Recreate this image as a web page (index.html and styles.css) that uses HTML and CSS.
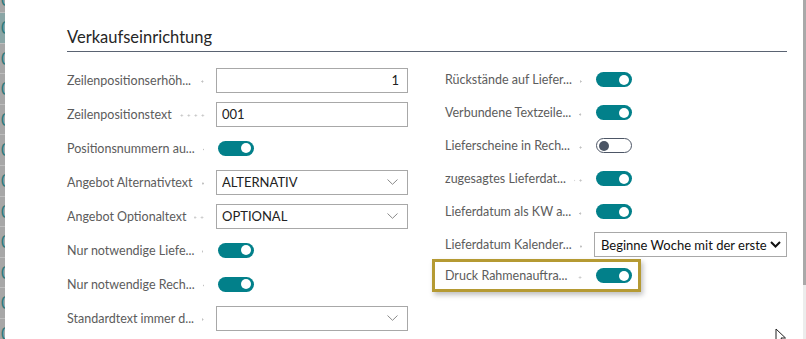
FILE: index.html
```html
<!DOCTYPE html>
<html lang="de">
<head>
  <meta charset="UTF-8" />
  <title>Verkaufseinrichtung</title>
  <link rel="stylesheet" href="styles.css">
</head>
<body>
  <div class="page">
    <div class="backdrop">
      <div class="bg-row">0</div>
      <div class="bg-row active">0</div>
      <div class="bg-row">0</div>
      <div class="bg-row">0</div>
      <div class="bg-row">0</div>
      <div class="bg-row">0</div>
      <div class="bg-row">0</div>
      <div class="bg-row">0</div>
      <div class="bg-row">0</div>
      <div class="bg-row">0</div>
      <div class="bg-row">0</div>
      <div class="bg-row">0</div>
    </div>

    <div class="dialog">
      <h2 class="group-title">Verkaufseinrichtung</h2>

      <div class="fields">
        <div class="column column-left">
          <div class="field">
            <div class="label-wrap"><span class="label">Zeilenpositionserhöh...</span><span class="leader"></span></div>
            <input class="text-input num" type="text" value="1">
          </div>
          <div class="field">
            <div class="label-wrap"><span class="label">Zeilenpositionstext</span><span class="leader"></span></div>
            <input class="text-input" type="text" value="001">
          </div>
          <div class="field">
            <div class="label-wrap"><span class="label">Positionsnummern au...</span><span class="leader"></span></div>
            <div class="toggle on"><span class="knob"></span></div>
          </div>
          <div class="field">
            <div class="label-wrap"><span class="label">Angebot Alternativtext</span><span class="leader"></span></div>
            <div class="select"><span class="select-text">ALTERNATIV</span>
              <svg class="chevron" width="11" height="6" viewBox="0 0 11 6"><polyline points="0.5,0.5 5.5,5.3 10.5,0.5" fill="none" stroke="#8a8a8a" stroke-width="1"/></svg>
            </div>
          </div>
          <div class="field">
            <div class="label-wrap"><span class="label">Angebot Optionaltext</span><span class="leader"></span></div>
            <div class="select"><span class="select-text">OPTIONAL</span>
              <svg class="chevron" width="11" height="6" viewBox="0 0 11 6"><polyline points="0.5,0.5 5.5,5.3 10.5,0.5" fill="none" stroke="#8a8a8a" stroke-width="1"/></svg>
            </div>
          </div>
          <div class="field">
            <div class="label-wrap"><span class="label">Nur notwendige Liefe...</span><span class="leader"></span></div>
            <div class="toggle on"><span class="knob"></span></div>
          </div>
          <div class="field">
            <div class="label-wrap"><span class="label">Nur notwendige Rech...</span><span class="leader"></span></div>
            <div class="toggle on"><span class="knob"></span></div>
          </div>
          <div class="field">
            <div class="label-wrap"><span class="label">Standardtext immer d...</span><span class="leader"></span></div>
            <div class="select"><span class="select-text"></span>
              <svg class="chevron" width="11" height="6" viewBox="0 0 11 6"><polyline points="0.5,0.5 5.5,5.3 10.5,0.5" fill="none" stroke="#8a8a8a" stroke-width="1"/></svg>
            </div>
          </div>
        </div>

        <div class="column column-right">
          <div class="field">
            <div class="label-wrap"><span class="label">Rückstände auf Liefer...</span><span class="leader"></span></div>
            <div class="toggle on"><span class="knob"></span></div>
          </div>
          <div class="field">
            <div class="label-wrap"><span class="label">Verbundene Textzeile...</span><span class="leader"></span></div>
            <div class="toggle on"><span class="knob"></span></div>
          </div>
          <div class="field">
            <div class="label-wrap"><span class="label">Lieferscheine in Rech...</span><span class="leader"></span></div>
            <div class="toggle off"><span class="knob"></span></div>
          </div>
          <div class="field">
            <div class="label-wrap"><span class="label">zugesagtes Lieferdat...</span><span class="leader"></span></div>
            <div class="toggle on"><span class="knob"></span></div>
          </div>
          <div class="field">
            <div class="label-wrap"><span class="label">Lieferdatum als KW a...</span><span class="leader"></span></div>
            <div class="toggle on"><span class="knob"></span></div>
          </div>
          <div class="field">
            <div class="label-wrap"><span class="label">Lieferdatum Kalender...</span><span class="leader"></span></div>
            <div class="select native"><span class="select-text">Beginne Woche mit der ersten vollen Woche</span>
              <svg class="chevron-bold" width="11" height="7" viewBox="0 0 11 7"><polyline points="1,1 5.5,5.5 10,1" fill="none" stroke="#111" stroke-width="2"/></svg>
            </div>
          </div>
          <div class="field highlight">
            <div class="label-wrap"><span class="label">Druck Rahmenauftra...</span><span class="leader"></span></div>
            <div class="toggle on"><span class="knob"></span></div>
          </div>
        </div>
      </div>
    </div>

    <div class="scrollbar"></div>
  </div>

  <svg class="cursor" width="12" height="18" viewBox="0 0 12 18">
    <path d="M1,1 L1,14 L4,11 L6.5,16.5 L8.5,15.5 L6,10 L10.5,10 Z" fill="#fff" stroke="#222" stroke-width="1"/>
  </svg>
</body>
</html>
```

FILE: styles.css
```css
body {
  margin: 0;
  font-family: Lato, "Open Sans", sans-serif;
  background: #fff;
}

.page {
  display: flex;
  height: 339px;
  overflow: hidden;
}

/* dimmed list behind the dialog */
.backdrop {
  width: 5px;
  flex-shrink: 0;
  background: #a7a7a7;
  overflow: hidden;
}

.bg-row {
  height: 30.6px;
  box-sizing: border-box;
  border-top: 1px solid #bdbdbd;
  padding-left: 1px;
  font-size: 17px;
  line-height: 30px;
  color: #2c7a7d;
}

.bg-row:first-child {
  height: 12px;
  border-top: none;
  line-height: 0;
}

.bg-row.active {
  background: #8aa6a6;
}

.dialog {
  flex: 1;
  padding: 26px 16px 0 62px;
}

.scrollbar {
  width: 3px;
  flex-shrink: 0;
  background: linear-gradient(#a9a9a9 0, #a9a9a9 285px, #ececec 285px);
}

.group-title {
  margin: 0;
  font-size: 16.5px;
  font-weight: 400;
  line-height: 22px;
  color: #262626;
  padding-bottom: 3px;
  border-bottom: 1px solid #5a6372;
}

.fields {
  display: flex;
  gap: 37px;
  margin-top: 11px;
}

.column-left {
  width: 341px;
}

.column-right {
  flex: 1;
}

.field {
  display: flex;
  align-items: center;
  height: 34px;
}

.column-right .field {
  height: 33px;
}

.label-wrap {
  width: 149px;
  flex-shrink: 0;
  display: flex;
  align-items: center;
}

.label {
  white-space: nowrap;
  font-size: 12.5px;
  color: #5c5c5c;
}

.leader {
  flex: 1;
  height: 3px;
  margin: 3px 10px 0 8px;
  background-image: radial-gradient(circle, #c2c2c2 0.8px, transparent 1.3px);
  background-size: 7px 3px;
  background-position: right center;
  background-repeat: repeat-x;
}

.text-input {
  width: 192px;
  height: 25px;
  box-sizing: border-box;
  border: 1px solid #a8a8a8;
  border-radius: 0;
  padding: 0 8px 0 5px;
  margin: 0;
  font-family: inherit;
  font-size: 13px;
  color: #222;
  outline: none;
}

.text-input.num {
  text-align: right;
}

.select {
  width: 192px;
  height: 25px;
  box-sizing: border-box;
  border: 1px solid #a8a8a8;
  display: flex;
  align-items: center;
  padding: 0 9px 0 5px;
  font-size: 13px;
  color: #222;
}

.select-text {
  flex: 1;
  white-space: nowrap;
  overflow: hidden;
}

.select.native {
  width: 193px;
  padding: 0 5px 0 6px;
  font-size: 13px;
  color: #111;
}

.chevron-bold {
  margin-left: 3px;
}

.toggle {
  width: 36px;
  height: 15px;
  box-sizing: border-box;
  border-radius: 8px;
  margin-left: 2px;
  display: flex;
  align-items: center;
  padding: 0 3px;
}

.toggle.on {
  background: #02808a;
  justify-content: flex-end;
}

.toggle.off {
  border: 1.5px solid #4d5666;
  background: #fff;
  justify-content: flex-start;
  padding: 0 2px;
}

.knob {
  width: 10px;
  height: 10px;
  border-radius: 50%;
  background: #fff;
}

.toggle.off .knob {
  background: #4b5565;
}

.highlight {
  width: 209px;
  height: 43px;
  box-sizing: border-box;
  margin: -2px 0 0 -13px;
  padding-left: 10px;
  border: 3px solid #b59a33;
  box-shadow: 2px 3px 5px rgba(0, 0, 0, 0.25);
}

.cursor {
  position: absolute;
  left: 775px;
  top: 328px;
}
```
